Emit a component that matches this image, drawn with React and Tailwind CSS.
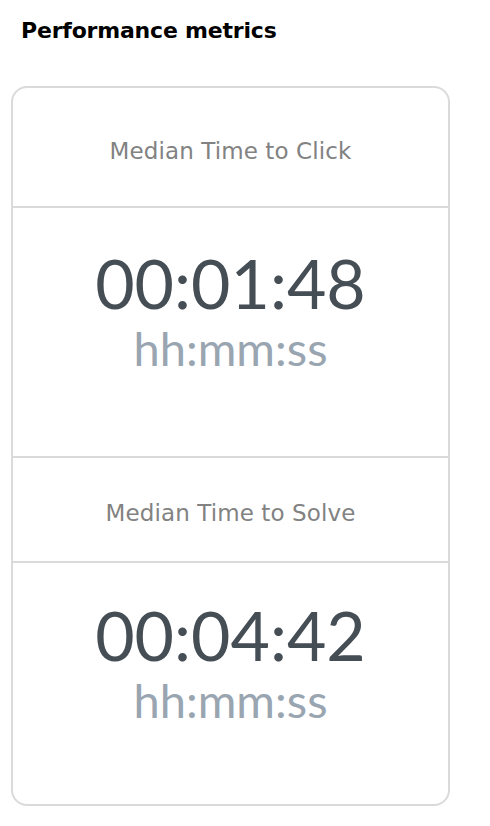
import React from "react";

const metrics = [
  { label: "Median Time to Click", value: "00:01:48", headH: "h-[118px]", bodyH: "h-[250px]", pt: "pt-[41px]" },
  { label: "Median Time to Solve", value: "00:04:42", headH: "h-[103px]", bodyH: "h-[243px]", pt: "pt-[38px]" },
];

export default function App() {
  return (
    <div className="w-[490px] h-[826px] bg-white font-['DejaVu_Sans',sans-serif]">
      <h2 className="pl-[21px] pt-[16px] text-[22px] leading-[30px] font-bold text-black tracking-[-0.2px]">
        Performance metrics
      </h2>

      <div className="ml-[11px] mt-[40px] w-[439px] border-2 border-[#dadada] rounded-[16px] overflow-hidden">
        {metrics.map((m, i) => (
          <div key={m.label} className={i > 0 ? "border-t-2 border-[#dadada]" : ""}>
            {/* Header */}
            <div className={`${m.headH} flex items-center justify-center`}>
              <p className="text-[23px] text-[#828282] tracking-[0.1px] pt-[8px]">{m.label}</p>
            </div>

            {/* Value */}
            <div className={`${m.bodyH} border-t-2 border-[#dadada] flex flex-col items-center ${m.pt} font-['Lato',sans-serif]`}>
              <p className="text-[68px] leading-[68px] text-[#454d55]">{m.value}</p>
              <p className="mt-[7px] text-[47px] leading-[48px] text-[#99a5b0]">hh:mm:ss</p>
            </div>
          </div>
        ))}
      </div>
    </div>
  );
}
